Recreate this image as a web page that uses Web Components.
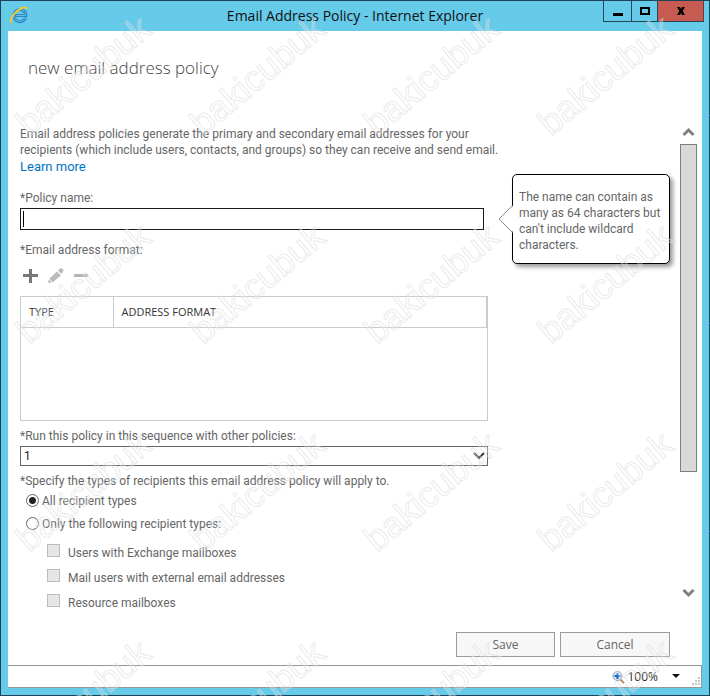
<!DOCTYPE html>
<html lang="en">
<head>
<meta charset="utf-8">
<meta name="viewport" content="width=device-width, initial-scale=1">
<title>Email Address Policy</title>
<style>
  :root {
    --main-font: Roboto, "Noto Sans", sans-serif;
    --title-font: "Open Sans", "Noto Sans", sans-serif;
    --font-color: #666;
    --frame-color: #66cae9;
    --line-color: #c6cdcd;
  }
  body {
    margin: 0;
    font-family: var(--main-font);
    font-size: 12px;
    line-height: 16px;
    color: var(--font-color);
  }
</style>
</head>
<body>
<app-window>
  <title-bar slot="title">Email Address Policy - Internet Explorer</title-bar>
  <scroll-panel>
    <policy-form></policy-form>
  </scroll-panel>
  <form-actions slot="actions"></form-actions>
  <status-bar slot="status">100%</status-bar>
</app-window>
<water-mark data-text="bakicubuk"></water-mark>

<script>
"use strict";

class AppWindow extends HTMLElement {
  constructor() {
    super();
    const shadow = this.attachShadow({ mode: "open" });
    shadow.innerHTML = `
    <style>
      :host {
        display: flex;
        flex-direction: column;
        box-sizing: border-box;
        min-height: 100vh;
        padding: 0 7px 7px;
        border: 1px solid #1c4258;
        background: var(--frame-color);
      }
      main {
        display: flex;
        flex-direction: column;
        flex-grow: 1;
        background: #fff;
      }
      h1 {
        margin: 0;
        padding: 25px 20px 42px;
        font-family: var(--title-font);
        font-size: 17px;
        line-height: 24px;
        font-weight: 300;
        color: #444;
      }
    </style>
    <slot name="title"></slot>
    <main>
      <h1>new email address policy</h1>
      <slot></slot>
      <slot name="actions"></slot>
      <slot name="status"></slot>
    </main>
    `;
  }
}

class TitleBar extends HTMLElement {
  constructor() {
    super();
    const shadow = this.attachShadow({ mode: "open" });
    shadow.innerHTML = `
    <style>
      :host {
        display: grid;
        grid-template-columns: 100px 1fr 100px;
        height: 30px;
        color: #111;
        font-family: var(--title-font);
        font-size: 14px;
        line-height: 30px;
      }
      .logo {
        width: 20px;
        height: 20px;
        margin: 4px 0 0 1px;
      }
      .title {
        text-align: center;
        white-space: nowrap;
      }
      .buttons {
        display: flex;
        justify-content: flex-end;
        box-sizing: border-box;
        height: 21px;
        margin-right: -2px;
      }
      button {
        box-sizing: border-box;
        width: 28px;
        height: 21px;
        padding: 0;
        border: 1px solid #24485a;
        border-top: 0;
        border-right: 0;
        background: transparent;
      }
      button.maximize {
        width: 26px;
      }
      button.close {
        width: 47px;
        border-right: 1px solid #6b3a3a;
        background: #c75b51;
      }
      button svg {
        display: block;
        margin: 0 auto;
      }
    </style>
    <svg class="logo" viewBox="0 0 20 20" aria-hidden="true">
      <path d="M16.6 12.8A6 6 0 1 1 17 10.6H6.6" fill="none" stroke="#2b86c8" stroke-width="3"/>
      <path d="M16.3 12.8A5.9 5.9 0 1 1 16.8 10.4H7" fill="none" stroke="#6dbdec" stroke-width="1"/>
      <path d="M3 17.6C0 17 2.600 10.500 8 6.200S17.800 .8 17.300 4.200" fill="none" stroke="#f1c92f" stroke-width="2"/>
    </svg>
    <div class="title"><slot></slot></div>
    <div class="buttons">
      <button type="button" aria-label="Minimize">
        <svg width="12" height="12" viewBox="0 0 12 12"><path d="M1 8h10v3H1z"/></svg>
      </button>
      <button type="button" class="maximize" aria-label="Maximize">
        <svg width="12" height="12" viewBox="0 0 12 12"><path d="M2 3h8v6H2z" fill="none" stroke="#000" stroke-width="2"/></svg>
      </button>
      <button type="button" class="close" aria-label="Close">
        <svg width="12" height="12" viewBox="0 0 12 12"><path d="M2 2h3l1 2 1-2h3L7.700 6l2.300 4H7L6 8l-1 2H2l2.300-4z"/></svg>
      </button>
    </div>
    `;
  }
}

class ScrollPanel extends HTMLElement {
  constructor() {
    super();
    const shadow = this.attachShadow({ mode: "open" });
    shadow.innerHTML = `
    <style>
      :host {
        display: flex;
        flex-grow: 1;
        gap: 10px;
        padding: 0 5px 0 12px;
      }
      .content {
        flex-grow: 1;
        min-width: 0;
      }
      .scrollbar {
        display: flex;
        flex-direction: column;
        width: 17px;
        margin-bottom: 12px;
      }
      .thumb {
        box-sizing: border-box;
        flex: 0 0 68%;
        margin-bottom: auto;
        border: 1px solid #7b8080;
        background: #d9d9d9;
      }
      svg {
        display: block;
        flex: none;
      }
    </style>
    <div class="content"><slot></slot></div>
    <div class="scrollbar" aria-hidden="true">
      <svg width="17" height="22" viewBox="0 0 17 22"><path d="M3.500 13l5-5 5 5" fill="none" stroke="#808080" stroke-width="3"/></svg>
      <div class="thumb"></div>
      <svg width="17" height="22" viewBox="0 0 17 22"><path d="M3.500 8l5 5 5-5" fill="none" stroke="#808080" stroke-width="3"/></svg>
    </div>
    `;
  }
}

class HintCallout extends HTMLElement {
  constructor() {
    super();
    const shadow = this.attachShadow({ mode: "open" });
    shadow.innerHTML = `
    <style>
      :host {
        display: block;
        box-sizing: border-box;
        width: 158px;
        padding: 14px 0 10px 6px;
        border: 1px solid #000;
        border-radius: 5px;
        background: #fff;
        box-shadow: 3px 3px 4px rgba(0, 0, 0, 0.4);
        white-space: nowrap;
      }
      svg {
        position: absolute;
        top: 50%;
        left: -15px;
        transform: translateY(-50%);
      }
    </style>
    <svg width="16" height="30" viewBox="0 0 16 30" aria-hidden="true">
      <path d="M16 1L1 15l15 14" fill="#fff"/>
      <path d="M14.500 1.500L1 15l13.500 13.500" fill="none" stroke="#888"/>
    </svg>
    <slot></slot>
    `;
  }
}

class AddressTable extends HTMLElement {
  constructor() {
    super();
    const shadow = this.attachShadow({ mode: "open" });
    shadow.innerHTML = `
    <style>
      :host {
        display: block;
      }
      .toolbar {
        display: flex;
        gap: 5px;
        height: 38px;
        padding-top: 8px;
        box-sizing: border-box;
      }
      .toolbar button {
        width: 20px;
        height: 20px;
        padding: 0;
        border: 0;
        background: none;
      }
      .toolbar svg {
        display: block;
      }
      .list {
        box-sizing: border-box;
        height: 125px;
        border: 1px solid var(--line-color);
      }
      table {
        width: 100%;
        border-collapse: collapse;
        color: #333;
        font-family: var(--title-font);
        font-size: 11px;
      }
      th {
        box-sizing: border-box;
        height: 30px;
        padding: 0 8px;
        border-right: 1px solid var(--line-color);
        border-bottom: 1px solid var(--line-color);
        font-weight: normal;
        text-align: left;
      }
      th:first-child {
        width: 92px;
      }
    </style>
    <div class="toolbar">
      <button type="button" aria-label="Add">
        <svg width="20" height="20" viewBox="0 0 20 20"><path d="M3 8h6V3h3v5h6v3h-6v6H9v-6H3z" fill="#777"/></svg>
      </button>
      <button type="button" aria-label="Edit" disabled>
        <svg width="20" height="20" viewBox="0 0 20 20">
          <path d="M3 17l1-4 8-7.500 4 4L8 16z" fill="#bbb"/>
          <path d="M13 4.500l2-2q1-1 2 0l1 1q1 1 0 2l-1.500 2.500z" fill="#bbb"/>
          <path d="M4 13l3.500 3.500" stroke="#fff"/>
        </svg>
      </button>
      <button type="button" aria-label="Remove" disabled>
        <svg width="20" height="20" viewBox="0 0 20 20"><path d="M4 8h14v3H4z" fill="#b5b5b5"/></svg>
      </button>
    </div>
    <div class="list">
      <table>
        <thead>
          <tr><th scope="col">TYPE</th><th scope="col">ADDRESS FORMAT</th></tr>
        </thead>
        <tbody></tbody>
      </table>
    </div>
    `;
  }
}

class PolicyForm extends HTMLElement {
  constructor() {
    super();
    const shadow = this.attachShadow({ mode: "open" });
    shadow.innerHTML = `
    <style>
      :host {
        display: block;
      }
      form {
        margin: 0 182px 0 0;
      }
      p {
        margin: 4px 0 0;
        white-space: nowrap;
      }
      a {
        display: inline-block;
        color: #0072c6;
        font-size: 13px;
        line-height: 17px;
        text-decoration: none;
      }
      .label {
        display: block;
      }
      .name-label {
        margin: 15px 0 2px;
      }
      .name-row {
        position: relative;
        display: flex;
        margin-bottom: 12px;
        padding-right: 4px;
      }
      hint-callout {
        position: absolute;
        top: 50%;
        left: calc(100% + 24px);
        transform: translateY(-50%);
      }
      input[type="text"] {
        box-sizing: border-box;
        width: 100%;
        height: 22px;
        margin: 0;
        padding: 0 4px;
        border: 1px solid #1a1a1a;
        border-radius: 0;
        outline: 0;
        font: inherit;
        background: linear-gradient(#000, #000) 2px 2px / 1px 16px no-repeat #fff;
      }
      .sequence {
        margin: 7px 0 2px;
      }
      .select {
        display: grid;
        align-items: center;
        margin-bottom: 7px;
      }
      .select > * {
        grid-area: 1 / 1;
      }
      .select svg {
        justify-self: end;
        margin-right: 2px;
        pointer-events: none;
      }
      select {
        appearance: none;
        box-sizing: border-box;
        width: 100%;
        height: 20px;
        padding: 0 3px;
        border: 1px solid #666;
        border-radius: 0;
        background: #fff;
        color: #222;
        font: inherit;
      }
      fieldset {
        min-width: 0;
        margin: 0;
        padding: 0;
        border: 0;
      }
      legend {
        padding: 0;
        white-space: nowrap;
      }
      .radio,
      .check {
        display: flex;
        align-items: center;
        white-space: nowrap;
      }
      .radio {
        gap: 3px;
        height: 23px;
        padding-left: 6px;
      }
      .check {
        gap: 8px;
        height: 25px;
        padding-left: 27px;
      }
      .checks {
        padding-top: 5px;
      }
      input[type="radio"],
      input[type="checkbox"] {
        appearance: none;
        box-sizing: border-box;
        width: 13px;
        height: 13px;
        margin: 0;
        border: 1px solid #666;
        background: #fff;
      }
      input[type="radio"] {
        border-radius: 50%;
      }
      input[type="radio"]:checked {
        background: radial-gradient(circle, #222 3px, #fff 4px);
      }
      input[type="checkbox"] {
        margin-bottom: 4px;
        border-color: #bcbcbc;
        background: #e6e6e6;
      }
    </style>
    <form>
      <p>Email address policies generate the primary and secondary email addresses for your<br>recipients (which include users, contacts, and groups) so they can receive and send email.</p>
      <a href="#">Learn more</a>
      <label class="label name-label" for="name">*Policy name:</label>
      <div class="name-row">
        <input type="text" id="name" maxlength="64">
        <hint-callout>The name can contain as<br>many as 64 characters but<br>can't include wildcard<br>characters.</hint-callout>
      </div>
      <span class="label">*Email address format:</span>
      <address-table></address-table>
      <label class="label sequence" for="sequence">*Run this policy in this sequence with other policies:</label>
      <div class="select">
        <select id="sequence"><option>1</option></select>
        <svg width="14" height="12" viewBox="0 0 14 12" aria-hidden="true"><path d="M2 3l5 5 5-5" fill="none" stroke="#333" stroke-width="2"/></svg>
      </div>
      <fieldset>
        <legend>*Specify the types of recipients this email address policy will apply to.</legend>
        <div class="radio"><input type="radio" name="types" id="all" checked><label for="all">All recipient types</label></div>
        <div class="radio"><input type="radio" name="types" id="only"><label for="only">Only the following recipient types:</label></div>
        <div class="checks">
          <div class="check"><input type="checkbox" id="exchange" disabled><label for="exchange">Users with Exchange mailboxes</label></div>
          <div class="check"><input type="checkbox" id="external" disabled><label for="external">Mail users with external email addresses</label></div>
          <div class="check"><input type="checkbox" id="resource" disabled><label for="resource">Resource mailboxes</label></div>
        </div>
      </fieldset>
    </form>
    `;
  }
}

class FormActions extends HTMLElement {
  constructor() {
    super();
    const shadow = this.attachShadow({ mode: "open" });
    shadow.innerHTML = `
    <style>
      :host {
        display: flex;
        justify-content: flex-end;
        gap: 5px;
        padding: 16px 32px 8px 0;
      }
      button {
        box-sizing: border-box;
        width: 99px;
        height: 25px;
        padding: 0;
        border: 1px solid #979c9c;
        background: #f7f7f7;
        color: inherit;
        font-family: var(--title-font);
        font-size: 12px;
      }
      .cancel {
        width: 110px;
      }
    </style>
    <button type="button">Save</button>
    <button type="button" class="cancel">Cancel</button>
    `;
  }
}

class StatusBar extends HTMLElement {
  constructor() {
    super();
    const shadow = this.attachShadow({ mode: "open" });
    shadow.innerHTML = `
    <style>
      :host {
        display: flex;
        justify-content: flex-end;
        align-items: center;
        box-sizing: border-box;
        height: 23px;
        border: 1px solid #8e9898;
        border-left: 0;
        color: #222;
      }
      button {
        display: flex;
        align-items: center;
        padding: 0;
        border: 0;
        background: none;
        color: inherit;
        font-family: var(--title-font);
        font-size: 12px;
      }
      .value {
        margin: 0 14px 0 2px;
      }
      .grip {
        align-self: flex-end;
        margin-left: 11px;
      }
    </style>
    <button type="button">
      <svg width="13" height="14" viewBox="0 0 13 14" aria-hidden="true">
        <path d="M8 9l4 4" stroke="#b5794c" stroke-width="2"/>
        <circle cx="5.500" cy="6" r="4.500" fill="#dcecfb" stroke="#8aa0b5"/>
        <path d="M5.500 3v6M2.500 6h6" stroke="#1464c8" stroke-width="2"/>
      </svg>
      <span class="value"><slot></slot></span>
      <svg width="8" height="5" viewBox="0 0 8 5" aria-hidden="true"><path d="M0 0h8L4 4z" fill="#111"/></svg>
    </button>
    <svg class="grip" width="10" height="10" viewBox="0 0 10 10" aria-hidden="true">
      <path d="M7 0h2v2H7zM4 3h2v2H4zM7 3h2v2H7zM1 6h2v2H1zM4 6h2v2H4zM7 6h2v2H7z" fill="#c4c4c4"/>
    </svg>
    `;
  }
}

class WaterMark extends HTMLElement {
  constructor() {
    super();
    const shadow = this.attachShadow({ mode: "open" });
    let marks = "";
    for (let row = 0; row < 4; row++) {
      for (let col = 0; col < 5; col++) {
        const place = `translate(${29 + col * 174} ${137 + row * 208}) rotate(-40)`;
        marks += `<text transform="${place}">${this.dataset.text}</text>`;
      }
    }
    shadow.innerHTML = `
    <style>
      :host {
        position: absolute;
        inset: 0;
        overflow: hidden;
        pointer-events: none;
      }
      svg {
        display: block;
        width: 100%;
        height: 100%;
      }
      text {
        font-family: "Liberation Sans", Arial, sans-serif;
        font-size: 36px;
        fill: rgba(255, 255, 255, 0.2);
        stroke: rgba(218, 218, 218, 0.55);
        stroke-width: 1px;
      }
    </style>
    <svg aria-hidden="true">${marks}</svg>
    `;
  }
}

customElements.define("app-window", AppWindow);
customElements.define("title-bar", TitleBar);
customElements.define("scroll-panel", ScrollPanel);
customElements.define("hint-callout", HintCallout);
customElements.define("address-table", AddressTable);
customElements.define("policy-form", PolicyForm);
customElements.define("form-actions", FormActions);
customElements.define("status-bar", StatusBar);
customElements.define("water-mark", WaterMark);
</script>
</body>
</html>
